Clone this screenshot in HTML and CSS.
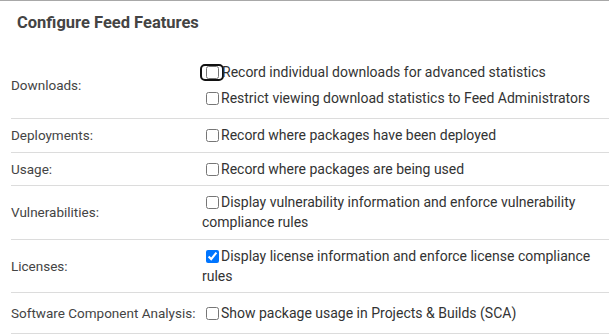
FILE: index.html
```html
<!DOCTYPE html>
<html lang="en">
<head>
    <meta charset="UTF-8">
    <meta name="viewport" content="width=device-width, initial-scale=1.0">
    <title>Configure Feed Features</title>
    <link rel="stylesheet" href="styles.css">
</head>
<body>
<div class="panel">
    <h2>Configure Feed Features</h2>
    <table class="features">
        <tr class="first">
            <td class="label">Downloads:</td>
            <td>
                <div class="option"><span class="focus-ring"><input type="checkbox"></span>Record individual downloads for advanced statistics</div>
                <div class="option"><input type="checkbox">Restrict viewing download statistics to Feed Administrators</div>
            </td>
        </tr>
        <tr>
            <td class="label">Deployments:</td>
            <td><input type="checkbox">Record where packages have been deployed</td>
        </tr>
        <tr>
            <td class="label">Usage:</td>
            <td><input type="checkbox">Record where packages are being used</td>
        </tr>
        <tr>
            <td class="label">Vulnerabilities:</td>
            <td><input type="checkbox">Display vulnerability information and enforce vulnerability compliance rules</td>
        </tr>
        <tr>
            <td class="label">Licenses:</td>
            <td><input type="checkbox" checked>Display license information and enforce license compliance rules</td>
        </tr>
        <tr class="tall">
            <td class="label">Software Component Analysis:</td>
            <td><input type="checkbox">Show package usage in Projects &amp; Builds (SCA)</td>
        </tr>
    </table>
</div>
</body>
</html>
```

FILE: styles.css
```css
body {
    font-family: Roboto, 'Noto Sans', sans-serif;
    margin: 0;
    padding: 0;
    background: #fff;
    color: #333;
}

.panel {
    border-top: 1px solid #a8a8a8;
    overflow: hidden;
}

h2 {
    margin: 0;
    padding: 12px 17px 0;
    height: 53px;
    box-sizing: border-box;
    font-size: 16.5px;
    line-height: 20px;
    font-weight: bold;
    color: #444;
}

.features {
    margin-left: 11px;
    width: calc(100% - 11px);
    border-collapse: collapse;
    font-size: 14px;
    line-height: 20px;
}

.features td {
    padding: 6px 0 6.5px;
    vertical-align: middle;
    border-bottom: 1px solid #dcdcdc;
}

.features .label {
    width: 191px;
    font-size: 13.5px;
    color: #444;
    white-space: nowrap;
}

.features tr.first td {
    padding: 5px 0 7px;
}

.features tr.tall td {
    padding: 10px 0;
}

.option {
    padding: 3px 0;
}

input[type="checkbox"] {
    width: 13px;
    height: 13px;
    margin: 0 2px 0 4px;
    vertical-align: -2px;
}

.focus-ring {
    display: inline-block;
    overflow: hidden;
    height: 13px;
    outline: 2px solid #111;
    border-radius: 3px;
    vertical-align: -2px;
}

.focus-ring input[type="checkbox"] {
    margin: 0 3px 0 4px;
    vertical-align: top;
}
```
